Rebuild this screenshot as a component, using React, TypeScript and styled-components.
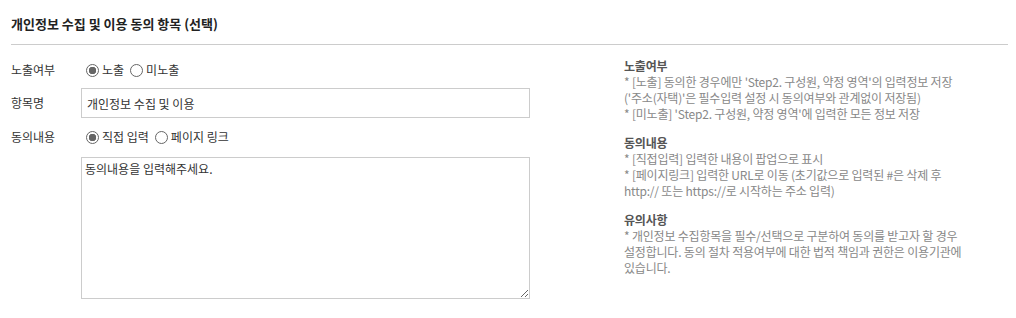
import React from 'react';
import styled, { createGlobalStyle } from 'styled-components';

const GlobalStyle = createGlobalStyle`
  body {
    margin: 0;
    background: #fff;
    font-family: 'Noto Sans CJK KR', 'Noto Sans', sans-serif;
    color: #333;
  }
`;

const Page = styled.div`
  padding: 0 8px 0 11px;
`;

const Header = styled.h2`
  margin: 0;
  padding: 14px 0 10px;
  font-size: 13px;
  line-height: 20px;
  font-weight: 700;
  color: #222;
  border-bottom: 1px solid #ccc;
`;

const Body = styled.div`
  display: flex;
  padding-top: 15px;
`;

const FormColumn = styled.div`
  width: 519px;
  display: flex;
  flex-direction: column;
`;

const Row = styled.div<{ top?: number }>`
  display: flex;
  align-items: center;
  margin-top: ${(props) => props.top ?? 0}px;
`;

const Label = styled.span`
  width: 70px;
  flex-shrink: 0;
  font-size: 12px;
  line-height: 20px;
  color: #333;
`;

const RadioGroup = styled.div`
  display: flex;
  align-items: center;
  gap: 6px;
  padding-left: 5px;
`;

const RadioLabel = styled.label`
  display: flex;
  align-items: center;
  gap: 3px;
  font-size: 12px;
  line-height: 20px;
  color: #333;
`;

const Radio = styled.input.attrs({ type: 'radio' })`
  appearance: none;
  margin: 0;
  width: 13px;
  height: 13px;
  border: 1px solid #666;
  border-radius: 50%;
  background: #fff;
  box-sizing: border-box;

  &:checked {
    background: radial-gradient(circle, #666 0 3.5px, #fff 4px);
  }
`;

const TextInput = styled.input`
  flex: 1;
  height: 30px;
  box-sizing: border-box;
  border: 1px solid #ccc;
  padding: 0 5px;
  font-family: inherit;
  font-size: 12px;
  color: #333;
  outline: none;
`;

const TextArea = styled.textarea`
  flex: 1;
  margin-left: 70px;
  height: 142px;
  box-sizing: border-box;
  border: 1px solid #ccc;
  padding: 3px 3px;
  font-family: inherit;
  font-size: 12px;
  line-height: 16px;
  color: #333;
  resize: vertical;
  outline: none;
`;

const HelpColumn = styled.div`
  margin-left: 94px;
  margin-top: -2px;
  flex: 1;
  display: flex;
  flex-direction: column;
  gap: 13px;
`;

const HelpBlock = styled.div`
  font-size: 12px;
  line-height: 16px;
  letter-spacing: -0.2px;
  color: #888;
`;

const HelpTitle = styled.div`
  font-weight: 700;
  color: #555;
`;

const helps = [
  {
    title: '노출여부',
    lines: [
      "* [노출] 동의한 경우에만 'Step2. 구성원, 약정 영역'의 입력정보 저장",
      "('주소(자택)'은 필수입력 설정 시 동의여부와 관계없이 저장됨)",
      "* [미노출] 'Step2. 구성원, 약정 영역'에 입력한 모든 정보 저장",
    ],
  },
  {
    title: '동의내용',
    lines: [
      '* [직접입력] 입력한 내용이 팝업으로 표시',
      '* [페이지링크] 입력한 URL로 이동 (초기값으로 입력된 #은 삭제 후',
      'http:// 또는 https://로 시작하는 주소 입력)',
    ],
  },
  {
    title: '유의사항',
    lines: [
      '* 개인정보 수집항목을 필수/선택으로 구분하여 동의를 받고자 할 경우',
      '설정합니다. 동의 절차 적용여부에 대한 법적 책임과 권한은 이용기관에',
      '있습니다.',
    ],
  },
];

const App = () => {
  return (
    <Page>
      <GlobalStyle />
      <Header>개인정보 수집 및 이용 동의 항목 (선택)</Header>
      <Body>
        <FormColumn>
          <Row>
            <Label>노출여부</Label>
            <RadioGroup>
              <RadioLabel>
                <Radio name="expose" defaultChecked />
                노출
              </RadioLabel>
              <RadioLabel>
                <Radio name="expose" />
                미노출
              </RadioLabel>
            </RadioGroup>
          </Row>
          <Row top={8}>
            <Label>항목명</Label>
            <TextInput defaultValue="개인정보 수집 및 이용" />
          </Row>
          <Row top={9}>
            <Label>동의내용</Label>
            <RadioGroup>
              <RadioLabel>
                <Radio name="content" defaultChecked />
                직접 입력
              </RadioLabel>
              <RadioLabel>
                <Radio name="content" />
                페이지 링크
              </RadioLabel>
            </RadioGroup>
          </Row>
          <Row top={10}>
            <TextArea defaultValue="동의내용을 입력해주세요." />
          </Row>
        </FormColumn>
        <HelpColumn>
          {helps.map((h) => (
            <HelpBlock key={h.title}>
              <HelpTitle>{h.title}</HelpTitle>
              {h.lines.map((l) => (
                <div key={l}>{l}</div>
              ))}
            </HelpBlock>
          ))}
        </HelpColumn>
      </Body>
    </Page>
  );
};

export default App;
